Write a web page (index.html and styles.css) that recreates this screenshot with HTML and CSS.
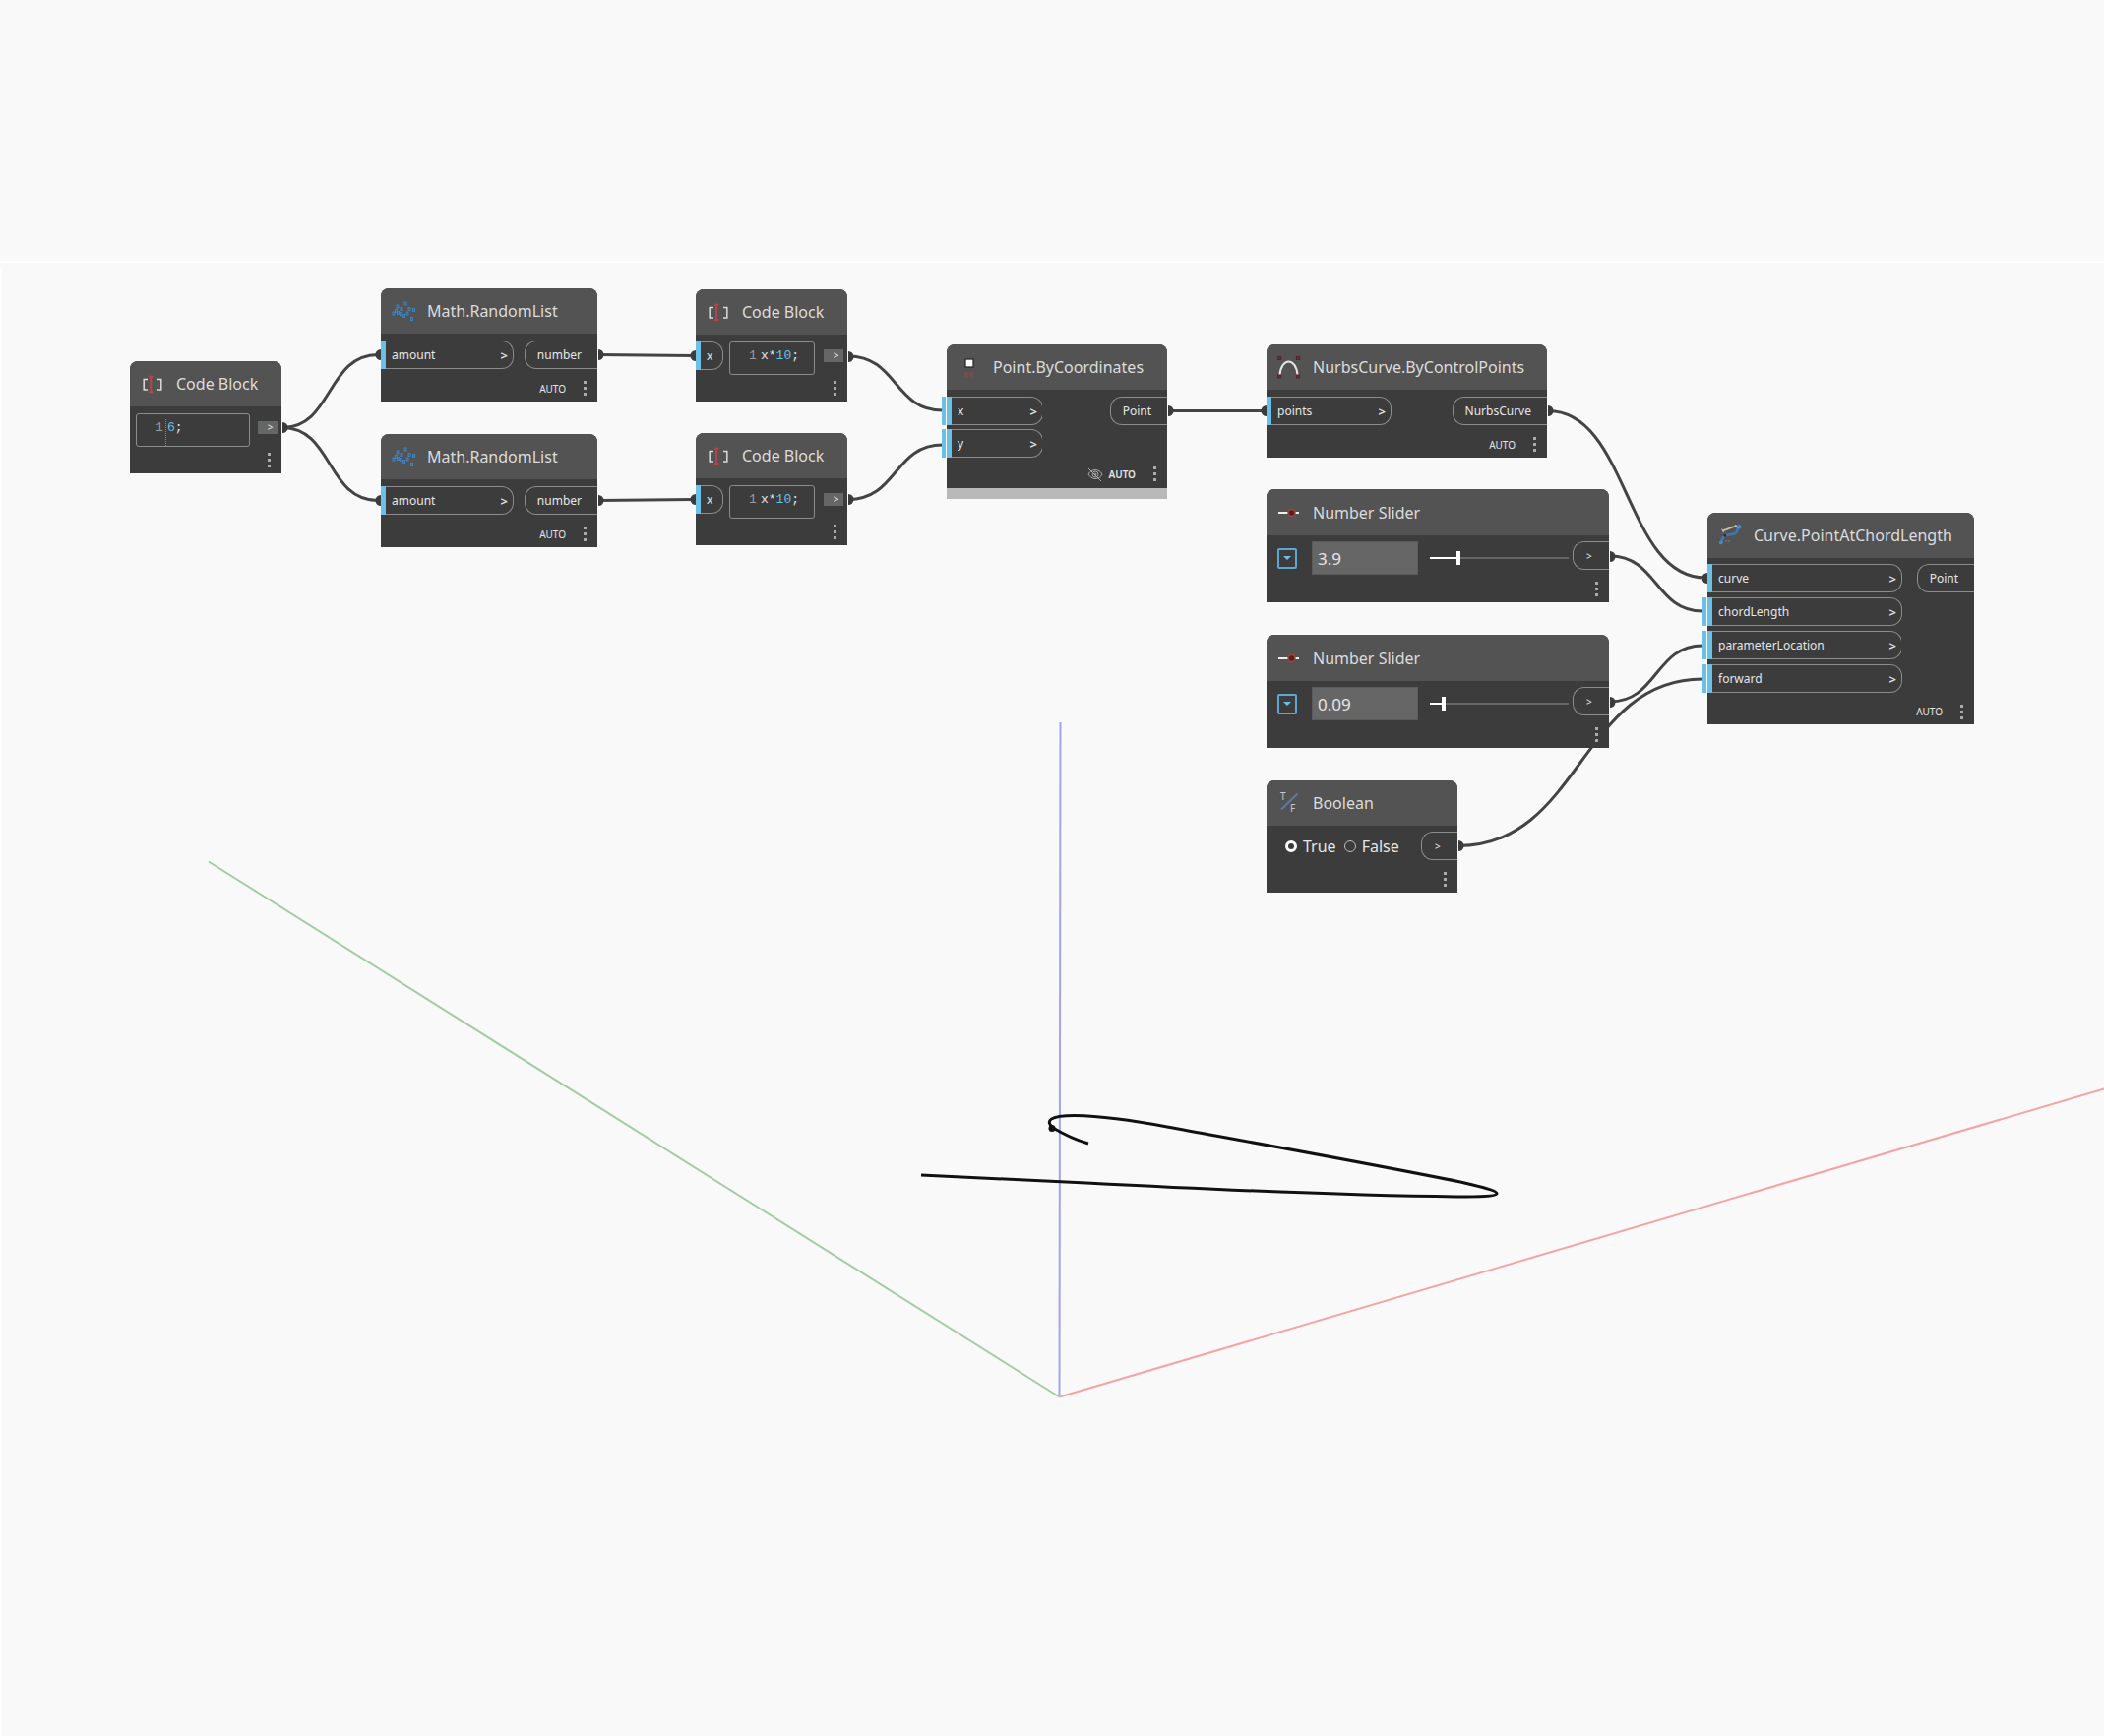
FILE: index.html
```html
<!DOCTYPE html>
<html lang="en">
<head>
<meta charset="utf-8">
<meta name="viewport" content="width=device-width, initial-scale=1">
<title>Curve.PointAtChordLength</title>
<link rel="stylesheet" href="styles.css">
</head>
<body>
<svg class="defs" aria-hidden="true">
  <symbol id="i-random" viewBox="0 0 24 24">
    <g fill="#3f6488" stroke="#3f80be" stroke-width="1">
      <rect x="13" y="3" width="2" height="3"/><rect x="5" y="6" width="2" height="3"/>
      <rect x="9" y="8.500" width="2" height="3"/><rect x="17" y="8.500" width="2" height="3"/>
      <rect x="21.500" y="9.500" width="2" height="3"/><rect x="1" y="13" width="2" height="3"/>
      <rect x="5.500" y="12.500" width="2" height="3"/><rect x="8.500" y="13.500" width="2" height="3"/>
      <rect x="15" y="13" width="2" height="3"/><rect x="11.500" y="15.500" width="2" height="3"/>
      <rect x="19.500" y="18.500" width="2" height="3"/><rect x="3.500" y="10.500" width="2" height="3"/>
    </g>
  </symbol>
  <symbol id="i-code" viewBox="0 0 24 24">
    <path d="M7 7.500H3.200v10.500H7M17 7.500h3.800v10.500H17" fill="none" stroke="#dcdcdc" stroke-width="1.500"/>
    <path d="M8 4.800h4.500M8 20.200h4.500M10.200 4.800v15.400" fill="none" stroke="#b8434a" stroke-width="2"/>
  </symbol>
  <symbol id="i-nurbs" viewBox="0 0 24 24">
    <path d="M2.500 20C4 2 19 2 20.500 20" fill="none" stroke="#e6e6e6" stroke-width="2"/>
    <path d="M.6 1.500h3v3h-3zM19.500 1.500h3v3h-3zM.6 20h3v3h-3zM19.500 20h3v3h-3z" fill="#4a3a3c" stroke="#5e2229" stroke-width="1.200"/>
  </symbol>
  <symbol id="i-slider" viewBox="0 0 24 24">
    <path d="M1 12h21" stroke="#eee" stroke-width="2"/>
    <circle cx="14.500" cy="12" r="3.500" fill="#5a1f1f" stroke="#97483f" stroke-width="1.500"/>
  </symbol>
  <symbol id="i-chord" viewBox="0 0 26 24">
    <path d="M3 21C4 15 6 12 10 11.500S19 11 20 8.500L22.500 3" fill="none" stroke="#3c79b4" stroke-width="3"/>
    <path d="M5 7L20 1.500" stroke="#c9c0a8" stroke-width="1.800"/>
    <path d="M4 5l2 4M19 0l2 4" stroke="#d8d0bc"/>
    <circle cx="7.500" cy="12.500" r="1.500" fill="#3a2326"/><circle cx="3" cy="20" r="2" fill="#4a88c4"/><circle cx="23" cy="2.500" r="2.400" fill="#4a8ac8"/>
    <path d="M8 18.500h2M11 18.500h2" stroke="#888"/>
  </symbol>
  <symbol id="i-hidden" viewBox="0 0 16 16">
    <g fill="none" stroke="#a8a8a8"><path d="M1 8c3-6 11-6 14 0c-3 6-11 6-14 0zM1 2l13 13"/><circle cx="8" cy="8" r="3"/><circle cx="8" cy="8" r="1"/></g>
  </symbol>
</svg>

<main class="canvas">
  <svg class="scene" aria-hidden="true">
    <rect class="edge" x="0" y="265" width="100%" height="2"/>
    <rect class="edge" x="0" y="272" width="2" height="100%"/>
    <g fill="none">
      <path class="axis-z" d="M1077.500 734L1076.500 1419"/>
      <path class="axis-y" d="M1076.500 1419.500L212 875.500"/>
      <path class="axis-x" d="M1076.500 1419.500L2138 1106.500"/>
      <path class="curve" d="M1106 1162C1092 1158 1080 1152 1070 1146C1062 1139 1066 1133.500 1092 1133.500C1125 1134 1160 1140 1186 1145C1284 1163 1390 1182 1484 1201C1510 1207 1521 1210 1521 1212.500C1521 1216 1500 1216 1480 1216C1380 1215 1200 1207 1104 1202L936 1194"/>
    </g>
    <circle cx="1069" cy="1146.500" r="3.500" fill="#111"/>
    <g class="wires">
      <path d="M287 434.500C338 434.500 332 360.500 384 360.500"/>
      <path d="M287 434.500C338 434.500 332 508.500 384 508.500"/>
      <path d="M608 360.500L705 361.500"/>
      <path d="M608 508.500L705 507.500"/>
      <path d="M862 362C912 362 908 417 958 417"/>
      <path d="M862 507.500C912 507.500 908 452 958 452"/>
      <path d="M1187 417.500H1285"/>
      <path d="M1573 417.500C1655 417.500 1651 587 1733 587"/>
      <path d="M1636 565C1684 565 1682 621 1730 621"/>
      <path d="M1636 713C1684 713 1682 656 1730 656"/>
      <path d="M1482 859.500C1606 859.500 1606 690 1730 690"/>
    </g>
    <g class="plugs">
      <path d="M287 429a5.500 5.500 0 0 1 0 11z"/><path d="M387 355a5.500 5.500 0 0 0 0 11z"/><path d="M387 503a5.500 5.500 0 0 0 0 11z"/>
      <path d="M608 355a5.500 5.500 0 0 1 0 11z"/><path d="M608 503a5.500 5.500 0 0 1 0 11z"/>
      <path d="M707 356a5.500 5.500 0 0 0 0 11z"/><path d="M707 502a5.500 5.500 0 0 0 0 11z"/>
      <path d="M862 357a5.500 5.500 0 0 1 0 11z"/><path d="M862 502a5.500 5.500 0 0 1 0 11z"/>
      <path d="M1187 412a5.500 5.500 0 0 1 0 11z"/><path d="M1287 412a5.500 5.500 0 0 0 0 11z"/>
      <path d="M1573 412a5.500 5.500 0 0 1 0 11z"/><path d="M1735 582a5.500 5.500 0 0 0 0 11z"/>
      <path d="M1636 560a5.500 5.500 0 0 1 0 11z"/><path d="M1636 708a5.500 5.500 0 0 1 0 11z"/><path d="M1482 854a5.500 5.500 0 0 1 0 11z"/>
    </g>
  </svg>

  <article class="node code n-code1">
    <header><svg><use href="#i-code"/></svg><h2>Code Block</h2></header>
    <div class="row">
      <div class="editor first"><span class="line">1</span><code contenteditable="true" role="textbox" aria-label="Code"><b>6</b>;</code></div>
      <button class="result" type="button" aria-label="Output">&gt;</button>
    </div>
    <footer><button class="menu" type="button" aria-label="Options"><i></i><i></i><i></i></button></footer>
  </article>

  <article class="node n-rand1">
    <header><svg><use href="#i-random"/></svg><h2>Math.RandomList</h2></header>
    <div class="row"><div class="inputs"><div class="in w-amount"><span>amount</span><span class="chev">&gt;</span></div></div><div class="out">number</div></div>
    <footer><span>AUTO</span><button class="menu" type="button" aria-label="Options"><i></i><i></i><i></i></button></footer>
  </article>

  <article class="node n-rand2">
    <header><svg><use href="#i-random"/></svg><h2>Math.RandomList</h2></header>
    <div class="row"><div class="inputs"><div class="in w-amount"><span>amount</span><span class="chev">&gt;</span></div></div><div class="out">number</div></div>
    <footer><span>AUTO</span><button class="menu" type="button" aria-label="Options"><i></i><i></i><i></i></button></footer>
  </article>

  <article class="node code n-code2">
    <header><svg><use href="#i-code"/></svg><h2>Code Block</h2></header>
    <div class="row">
      <div class="in w-x"><span>x</span></div>
      <div class="editor"><span class="line">1</span><code contenteditable="true" role="textbox" aria-label="Code">x*<b>10</b>;</code></div>
      <button class="result" type="button" aria-label="Output">&gt;</button>
    </div>
    <footer><button class="menu" type="button" aria-label="Options"><i></i><i></i><i></i></button></footer>
  </article>

  <article class="node code n-code3">
    <header><svg><use href="#i-code"/></svg><h2>Code Block</h2></header>
    <div class="row">
      <div class="in w-x"><span>x</span></div>
      <div class="editor"><span class="line">1</span><code contenteditable="true" role="textbox" aria-label="Code">x*<b>10</b>;</code></div>
      <button class="result" type="button" aria-label="Output">&gt;</button>
    </div>
    <footer><button class="menu" type="button" aria-label="Options"><i></i><i></i><i></i></button></footer>
  </article>

  <article class="node n-point">
    <header>
      <svg viewBox="0 0 24 24"><rect x="8" y="4" width="8" height="8" fill="#fff" stroke="#2a2a2a" stroke-width="1.300"/><text x="6" y="23" class="xy">XY</text></svg>
      <h2>Point.ByCoordinates</h2>
    </header>
    <div class="row">
      <div class="inputs"><div class="in default open w-xy"><span>x</span><span class="chev">&gt;</span></div><div class="in default open w-xy"><span>y</span><span class="chev">&gt;</span></div></div>
      <div class="out">Point</div>
    </div>
    <footer><svg class="eye"><use href="#i-hidden"/></svg><span class="strong">AUTO</span><button class="menu" type="button" aria-label="Options"><i></i><i></i><i></i></button></footer>
    <div class="status"></div>
  </article>

  <article class="node n-nurbs">
    <header><svg><use href="#i-nurbs"/></svg><h2>NurbsCurve.ByControlPoints</h2></header>
    <div class="row"><div class="inputs"><div class="in w-points"><span>points</span><span class="chev">&gt;</span></div></div><div class="out">NurbsCurve</div></div>
    <footer><span>AUTO</span><button class="menu" type="button" aria-label="Options"><i></i><i></i><i></i></button></footer>
  </article>

  <article class="node slider n-slider1">
    <header><svg><use href="#i-slider"/></svg><h2>Number Slider</h2></header>
    <div class="row">
      <button class="expand" type="button" aria-label="Slider settings"></button>
      <input class="value" type="text" value="3.9" aria-label="Value">
      <input class="range" type="range" min="0" max="20" step="0.1" value="3.9" aria-label="Slider" style="--fill:19%">
      <div class="out small">&gt;</div>
    </div>
    <footer><button class="menu" type="button" aria-label="Options"><i></i><i></i><i></i></button></footer>
  </article>

  <article class="node slider n-slider2">
    <header><svg><use href="#i-slider"/></svg><h2>Number Slider</h2></header>
    <div class="row">
      <button class="expand" type="button" aria-label="Slider settings"></button>
      <input class="value" type="text" value="0.09" aria-label="Value">
      <input class="range" type="range" min="0" max="1" step="0.01" value="0.09" aria-label="Slider" style="--fill:9%">
      <div class="out small">&gt;</div>
    </div>
    <footer><button class="menu" type="button" aria-label="Options"><i></i><i></i><i></i></button></footer>
  </article>

  <article class="node bool n-bool">
    <header>
      <svg viewBox="0 0 24 24"><path d="M4 18.500L20.500 2.500" stroke="#5b7ba6" stroke-width="2"/><text x="3" y="9" class="tf">T</text><text x="13" y="21" class="tf">F</text></svg>
      <h2>Boolean</h2>
    </header>
    <div class="row">
      <div class="choices">
        <label><input type="radio" name="bool" checked>True</label>
        <label><input type="radio" name="bool">False</label>
      </div>
      <div class="out small">&gt;</div>
    </div>
    <footer><button class="menu" type="button" aria-label="Options"><i></i><i></i><i></i></button></footer>
  </article>

  <article class="node chord n-chord">
    <header><svg><use href="#i-chord"/></svg><h2>Curve.PointAtChordLength</h2></header>
    <div class="row">
      <div class="inputs loose">
        <div class="in w-wide"><span>curve</span><span class="chev">&gt;</span></div>
        <div class="in default w-wide"><span>chordLength</span><span class="chev">&gt;</span></div>
        <div class="in default open w-wide"><span>parameterLocation</span><span class="chev">&gt;</span></div>
        <div class="in default w-wide"><span>forward</span><span class="chev">&gt;</span></div>
      </div>
      <div class="out">Point</div>
    </div>
    <footer><span>AUTO</span><button class="menu" type="button" aria-label="Options"><i></i><i></i><i></i></button></footer>
  </article>
</main>
</body>
</html>
```
FILE: styles.css
```css
* { box-sizing: border-box; }

body {
  margin: 0;
  background: #f9f9f9;
  color: #e6e6e6;
  font-family: "Noto Sans", "Open Sans", sans-serif;
}

button, input { font: inherit; color: inherit; margin: 0; padding: 0; border: 0; }

.defs { position: absolute; width: 0; height: 0; }
.xy { font: 700 8px "Noto Sans", sans-serif; fill: #87494c; }
.tf { font: 10px "Noto Sans", sans-serif; fill: #c9c9c9; }

/* Graph canvas: nodes float over the 3D preview */
.canvas { position: relative; min-height: 100vh; overflow: hidden; }
.scene { position: absolute; inset: 0; width: 100%; height: 100%; }
.edge { fill: #fff; }
.axis-x { stroke: #f5a3a6; stroke-width: 2; }
.axis-y { stroke: #a3cca4; stroke-width: 2; }
.axis-z { stroke: #a3a3f0; stroke-width: 2; }
.curve { stroke: #111; stroke-width: 3; }
.wires { fill: none; stroke: #444; stroke-width: 3; }
.plugs { fill: #3c3c3c; }

/* Node shell */
.node { position: absolute; background: #3c3c3c; border-radius: 8px 8px 0 0; }
.node header {
  display: flex; align-items: center; gap: 12px;
  height: 46px; padding-left: 11px;
  background: #535353; border-radius: 8px 8px 0 0;
}
.node header svg { width: 24px; height: 24px; flex: none; }
.node h2 { margin: 0; font-size: 16px; font-weight: 400; line-height: 24px; color: #dcdcdc; white-space: nowrap; }
.row { display: flex; justify-content: space-between; align-items: flex-start; padding-top: 7px; }
.node footer {
  display: flex; justify-content: flex-end; align-items: center;
  height: 33px; padding: 6px 10px 0 0;
  font-size: 10px; line-height: 16px;
}
.node.chord footer { height: 32px; }
.n-point footer { height: 31px; padding-top: 2px; }
.strong { font-weight: 600; }
.eye { width: 16px; height: 16px; margin-right: 5px; }
.menu { display: grid; gap: 3px; margin-left: 17px; padding: 0 1px; background: none; }
.menu i { width: 3px; height: 3px; background: #ababab; }
.status { height: 11px; background: #b9b9b9; }

/* Ports */
.inputs { display: grid; gap: 4px; }
.inputs.loose { gap: 5px; }
.in, .out {
  display: flex; align-items: center;
  height: 29px; border: 1px solid #8c8c8c;
  font-size: 12px; line-height: 16px;
}
.in {
  position: relative; justify-content: space-between;
  padding: 0 5px 0 11px; border-left: 0;
  border-radius: 0 12px 12px 0;
}
.in::before { content: ""; position: absolute; left: 0; top: -1px; bottom: -1px; width: 5px; background: #6ac0e7; }
.in.default::before { left: -5px; width: 10px; background: linear-gradient(90deg, #6ac0e7 4px, #f9f9f9 4px 5px, #6ac0e7 5px); }
.in.open::after { content: ""; position: absolute; right: -1px; top: 7px; bottom: 7px; width: 1px; background: #3c3c3c; }
.chev { font-size: 13px; font-weight: 600; }
.out { border-right: 0; border-radius: 12px 0 0 12px; padding: 0 16px 0 12px; }
.out.small { width: 37px; padding: 0 0 0 13px; font-size: 10px; }
.w-amount { width: 135px; }
.w-points { width: 127px; }
.w-xy { width: 98px; }
.w-x { width: 28px; }
.w-wide { width: 198px; }

/* Code block */
.code .row { justify-content: flex-start; padding-right: 4px; }
.editor {
  display: flex; width: 87px; height: 34px; margin-left: 6px; padding: 5px 0 0 19px;
  border: 1px solid #8c8c8c; border-radius: 3px;
  font: 13px/18px "Liberation Mono", monospace;
}
.editor.first { width: 116px; }
.line { width: 11px; margin-right: 1px; color: #9a9a9a; }
.editor code { font: inherit; outline: none; }
.first .line { border-right: 1px dotted #888; }
.editor b { font-weight: 400; color: #6ac0e7; }
.result {
  width: 20px; height: 13px; margin: 8px 0 8px auto; padding-left: 5px;
  background: #666; font-size: 10px; line-height: 13px;
}
.code footer { height: 27px; padding-top: 0; }

/* Number slider */
.slider header { height: 47px; }
.slider .row { align-items: center; justify-content: flex-start; padding: 6px 0 0 11px; }
.expand { display: grid; place-items: center; width: 20px; height: 21px; border: 2px solid #5aa9d2; border-radius: 2px; background: none; }
.expand::after { content: ""; border: 4px solid transparent; border-top-color: #6ac0e7; border-bottom: 0; }
.value { width: 108px; height: 34px; margin-left: 15px; padding-left: 5px; border: 1px solid #5a5a5a; background: #666; font-size: 17px; }
.range { -webkit-appearance: none; appearance: none; width: 141px; height: 14px; margin-left: 12px; background: linear-gradient(90deg, #fff var(--fill), #666 var(--fill)) center / 100% 2px no-repeat; }
.range::-webkit-slider-thumb { -webkit-appearance: none; width: 4px; height: 14px; background: #fff; }
.slider .out { margin-left: auto; align-self: flex-start; }
.slider footer { height: 28px; padding-top: 0; }

/* Boolean */
.bool .row, .chord .row { padding-top: 6px; }
.choices { display: flex; gap: 8px; padding-left: 19px; font-size: 16px; line-height: 30px; }
.choices label { display: flex; align-items: center; gap: 6px; height: 29px; }
.choices input { -webkit-appearance: none; appearance: none; width: 12px; height: 12px; border: 1px solid #bbb; border-radius: 50%; }
.choices input:checked { border: 3px solid #fff; }

/* Positions on the canvas */
.n-code1 { left: 132px; top: 367px; width: 154px; }
.n-rand1 { left: 387px; top: 293px; width: 220px; }
.n-rand2 { left: 387px; top: 441px; width: 220px; }
.n-code2 { left: 707px; top: 294px; width: 154px; }
.n-code3 { left: 707px; top: 440px; width: 154px; }
.n-point { left: 962px; top: 350px; width: 224px; }
.n-nurbs { left: 1287px; top: 350px; width: 285px; }
.n-slider1 { left: 1287px; top: 497px; width: 348px; }
.n-slider2 { left: 1287px; top: 645px; width: 348px; }
.n-bool { left: 1287px; top: 793px; width: 194px; }
.n-chord { left: 1735px; top: 521px; width: 271px; }
```
